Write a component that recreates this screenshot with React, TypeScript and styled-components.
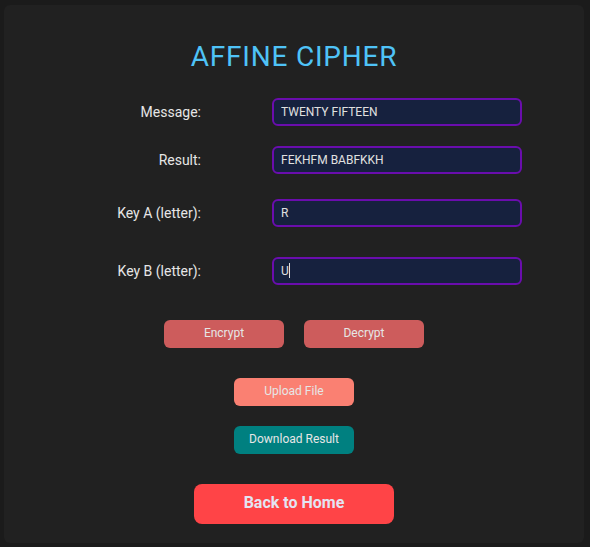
import React from "react";
import styled, { createGlobalStyle } from "styled-components";

const Global = createGlobalStyle`
  html, body { margin: 0; padding: 0; background: #1b1b1b; }
  body { font-family: Roboto, "Liberation Sans", sans-serif; }
`;

const Card = styled.div`
  box-sizing: border-box;
  width: 580px;
  height: 538px;
  margin: 5px 0 0 4px;
  background: #212121;
  border-radius: 6px;
  padding-top: 35px;
  display: flex;
  flex-direction: column;
  align-items: center;
`;

const Title = styled.h1`
  margin: 0;
  font-size: 28px;
  font-weight: 400;
  color: #4fc3f7;
  letter-spacing: 0.8px;
`;

const Row = styled.div<{ $gap: number }>`
  display: grid;
  grid-template-columns: 197px 250px;
  column-gap: 71px;
  align-items: center;
  margin-top: ${(p) => p.$gap}px;
  align-self: flex-start;
`;

const Label = styled.label`
  text-align: right;
  font-size: 14px;
  color: #e6e6e6;
`;

const FieldWrap = styled.div`
  position: relative;
`;

const Input = styled.input`
  box-sizing: border-box;
  width: 250px;
  height: 28px;
  border: 2px solid #6a0dad;
  border-radius: 6px;
  background: #16213e;
  color: #e0e0e0;
  font-family: Roboto, "Liberation Sans", sans-serif;
  font-size: 12px;
  padding: 0 7px 1px;
  outline: none;
`;

const Caret = styled.span`
  position: absolute;
  left: 17px;
  top: 6px;
  width: 1px;
  height: 15px;
  background: #e0e0e0;
`;

const ButtonRow = styled.div<{ $gap: number }>`
  display: flex;
  gap: 20px;
  justify-content: center;
  margin-top: ${(p) => p.$gap}px;
`;

const Btn = styled.button<{ $bg: string }>`
  width: 120px;
  height: 28px;
  border: none;
  border-radius: 6px;
  background: ${(p) => p.$bg};
  color: #e6e6e6;
  font-family: Roboto, "Liberation Sans", sans-serif;
  font-size: 12px;
  padding: 0 0 2px;
`;

const HomeBtn = styled.button`
  margin-top: 30px;
  width: 200px;
  height: 40px;
  border: none;
  border-radius: 8px;
  background: #ff4447;
  color: #e4e4f2;
  font-family: Roboto, "Liberation Sans", sans-serif;
  font-size: 16px;
  font-weight: 700;
  padding: 0 0 3px;
`;

const fields = [
  { label: "Message:", value: "TWENTY FIFTEEN", gap: 25 },
  { label: "Result:", value: "FEKHFM BABFKKH", gap: 20 },
  { label: "Key A (letter):", value: "R", gap: 25 },
  { label: "Key B (letter):", value: "U", gap: 30, caret: true },
];

export default function App() {
  return (
    <>
      <Global />
      <Card>
        <Title>AFFINE CIPHER</Title>
        {fields.map((f) => (
          <Row key={f.label} $gap={f.gap}>
            <Label>{f.label}</Label>
            <FieldWrap>
              <Input readOnly value={f.value} />
              {f.caret && <Caret />}
            </FieldWrap>
          </Row>
        ))}
        <ButtonRow $gap={35}>
          <Btn $bg="#cd5c5c">Encrypt</Btn>
          <Btn $bg="#cd5c5c">Decrypt</Btn>
        </ButtonRow>
        <ButtonRow $gap={30}>
          <Btn $bg="#fa8072">Upload File</Btn>
        </ButtonRow>
        <ButtonRow $gap={20}>
          <Btn $bg="#008080">Download Result</Btn>
        </ButtonRow>
        <HomeBtn>Back to Home</HomeBtn>
      </Card>
    </>
  );
}
